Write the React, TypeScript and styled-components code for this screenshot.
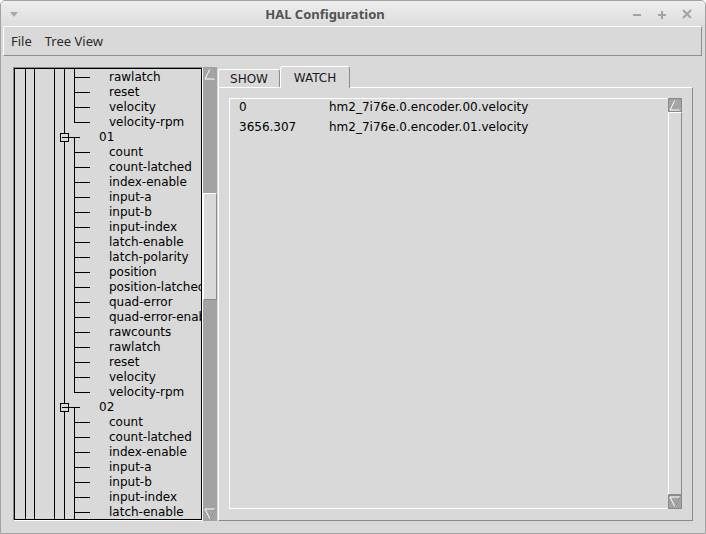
import React from 'react';
import styled, { createGlobalStyle } from 'styled-components';

const GlobalStyle = createGlobalStyle`
  html, body {
    margin: 0;
    padding: 0;
    background: #ffffff;
  }
  * {
    box-sizing: border-box;
  }
`;

const Window = styled.div`
  width: 706px;
  height: 534px;
  display: flex;
  flex-direction: column;
  border: 1px solid #a2a2a2;
  border-radius: 5px 5px 0 0;
  background: #d9d9d9;
  overflow: hidden;
`;

const TitleBar = styled.div`
  height: 25px;
  display: flex;
  align-items: center;
  background: linear-gradient(#eeeeee, #dcdcdc);
`;

const TitleSide = styled.div`
  width: 25px;
  height: 100%;
  display: flex;
  align-items: center;
  padding-left: 8px;
`;

const Title = styled.div`
  flex: 1;
  text-align: center;
  font-family: 'Noto Sans', 'DejaVu Sans', sans-serif;
  font-weight: bold;
  font-size: 13px;
  color: #535353;
`;

const TitleButtons = styled.div`
  display: flex;
  padding-right: 6px;
`;

const TitleButton = styled.div`
  width: 25px;
  height: 25px;
  display: flex;
  align-items: center;
  justify-content: center;
`;

const MenuBar = styled.div`
  height: 30px;
  margin: 0 3px 0 2px;
  display: flex;
  align-items: center;
  gap: 13px;
  padding-left: 7px;
  border-top: 1px solid #ffffff;
  border-left: 1px solid #ffffff;
  border-bottom: 1px solid #8e8e8e;
  border-right: 1px solid #8e8e8e;
  font-family: 'Noto Sans', 'DejaVu Sans', sans-serif;
  font-size: 13px;
  color: #2b2b2b;
`;

const Body = styled.div`
  flex: 1;
  display: flex;
  padding: 10px 12px 12px 12px;
`;

const TreeColumn = styled.div`
  display: flex;
  height: 454px;
  margin-top: 1px;
`;

const TreeFrame = styled.div`
  width: 190px;
  height: 100%;
  border: 1px solid;
  border-color: #8a8a8a #ffffff #ffffff #8a8a8a;
`;

const TreeCanvas = styled.div`
  height: 100%;
  border: 1px solid #000000;
  overflow: hidden;
  font-family: 'DejaVu Sans', sans-serif;
  font-size: 12px;
  color: #000000;
`;

const TreeRow = styled.div`
  height: 15px;
  display: flex;
  align-items: flex-start;
  white-space: nowrap;
`;

const TreeLabel = styled.span`
  line-height: 15px;
  padding-top: 1px;
`;

const TreeLines = styled.svg`
  flex: none;
  display: block;
`;

const ScrollBar = styled.div<{ $trough?: boolean }>`
  width: 14px;
  display: flex;
  flex-direction: column;
  background: ${({ $trough }) => ($trough ? '#a3a3a3' : '#d9d9d9')};
`;

const TreeScroll = styled(ScrollBar)`
  margin-right: 1px;
`;

const ArrowButton = styled.div<{ $filled?: boolean }>`
  height: 14px;
  flex: none;
  display: flex;
  align-items: center;
  justify-content: center;
  background: ${({ $filled }) => ($filled ? '#a3a3a3' : 'transparent')};
  border: ${({ $filled }) => ($filled ? '1px solid #8a8a8a' : 'none')};
`;

const ScrollSpacer = styled.div<{ $size?: number }>`
  flex: ${({ $size }) => ($size ? `0 0 ${$size}px` : '1')};
`;

const Thumb = styled.div<{ $size?: number }>`
  flex: ${({ $size }) => ($size ? `0 0 ${$size}px` : '1')};
  background: #d9d9d9;
  border: 1px solid;
  border-color: #ffffff #8a8a8a #8a8a8a #ffffff;
`;

const Panel = styled.div`
  width: 475px;
  display: flex;
  flex-direction: column;
`;

const TabRow = styled.div`
  height: 21px;
  display: flex;
  align-items: flex-end;
`;

const Tab = styled.div<{ $active?: boolean; $width: number }>`
  position: relative;
  z-index: ${({ $active }) => ($active ? 1 : 0)};
  width: ${({ $width }) => $width}px;
  height: ${({ $active }) => ($active ? '22px' : '18px')};
  margin-bottom: ${({ $active }) => ($active ? '-1px' : '0')};
  display: flex;
  align-items: center;
  justify-content: center;
  background: #d9d9d9;
  border-top: 1px solid #ffffff;
  border-left: 1px solid #ffffff;
  border-right: 1px solid #8a8a8a;
  border-radius: 3px 3px 0 0;
  font-family: 'DejaVu Sans', sans-serif;
  font-size: 12px;
  color: #1a1a1a;
`;

const TabBody = styled.div`
  flex: 1;
  display: flex;
  padding: 10px 10px 11px 10px;
  border: 1px solid;
  border-color: #ffffff #8a8a8a #8a8a8a #ffffff;
`;

const ListBox = styled.div`
  flex: 1;
  display: flex;
`;

const ListContent = styled.div`
  flex: 1;
  padding: 1px 0 0 9px;
  border-top: 1px solid #ffffff;
  border-left: 1px solid #ffffff;
  border-bottom: 1px solid #ffffff;
  font-family: 'DejaVu Sans', sans-serif;
  font-size: 12px;
  color: #000000;
`;

const ListRow = styled.div`
  height: 14px;
  line-height: 14px;
  margin-bottom: 6px;
  display: flex;
  white-space: nowrap;
`;

const ValueCell = styled.div`
  width: 90px;
`;

type Node = { label: string; parent?: boolean; last?: boolean };

const treeRows: Node[] = [
  { label: 'rawlatch' },
  { label: 'reset' },
  { label: 'velocity' },
  { label: 'velocity-rpm', last: true },
  { label: '01', parent: true },
  { label: 'count' },
  { label: 'count-latched' },
  { label: 'index-enable' },
  { label: 'input-a' },
  { label: 'input-b' },
  { label: 'input-index' },
  { label: 'latch-enable' },
  { label: 'latch-polarity' },
  { label: 'position' },
  { label: 'position-latched' },
  { label: 'quad-error' },
  { label: 'quad-error-enable' },
  { label: 'rawcounts' },
  { label: 'rawlatch' },
  { label: 'reset' },
  { label: 'velocity' },
  { label: 'velocity-rpm', last: true },
  { label: '02', parent: true },
  { label: 'count' },
  { label: 'count-latched' },
  { label: 'index-enable' },
  { label: 'input-a' },
  { label: 'input-b' },
  { label: 'input-index' },
  { label: 'latch-enable' },
];

const watches = [
  { value: '0', pin: 'hm2_7i76e.0.encoder.00.velocity' },
  { value: '3656.307', pin: 'hm2_7i76e.0.encoder.01.velocity' },
];

const ancestors = [10.5, 19.5, 39.5, 49.5];

const TreeItem = ({ node }: { node: Node }) => {
  const width = node.parent ? 84 : 94;
  return (
    <TreeRow>
      <TreeLines width={width} height={15} shapeRendering="crispEdges">
        {ancestors.map((x) => (
          <line key={x} x1={x} y1={0} x2={x} y2={15} stroke="#000" />
        ))}
        {node.parent ? (
          <>
            <line x1={59.5} y1={8.5} x2={59.5} y2={15} stroke="#000" />
            <line x1={53} y1={8.5} x2={65} y2={8.5} stroke="#000" />
            <rect x={45.5} y={4.5} width={8} height={8} fill="#d9d9d9" stroke="#000" />
            <line x1={47} y1={8.5} x2={53} y2={8.5} stroke="#000" />
          </>
        ) : (
          <>
            <line x1={59.5} y1={0} x2={59.5} y2={node.last ? 9 : 15} stroke="#000" />
            <line x1={59} y1={8.5} x2={75} y2={8.5} stroke="#000" />
          </>
        )}
      </TreeLines>
      <TreeLabel>{node.label}</TreeLabel>
    </TreeRow>
  );
};

const UpArrow = () => (
  <svg width="12" height="12" viewBox="0 0 12 12">
    <polygon points="6,1 11,11 1,11" fill="none" stroke="#ffffff" />
    <line x1="6" y1="1" x2="11" y2="11" stroke="#8a8a8a" />
  </svg>
);

const DownArrow = () => (
  <svg width="12" height="12" viewBox="0 0 12 12">
    <polygon points="1,1 11,1 6,11" fill="none" stroke="#ffffff" />
    <line x1="11" y1="1" x2="6" y2="11" stroke="#7a7a7a" />
  </svg>
);

const App = () => (
  <>
    <GlobalStyle />
    <Window>
      <TitleBar>
        <TitleSide>
          <svg width="10" height="8" viewBox="0 0 10 8">
            <polygon points="1,2 9,2 5,7" fill="#a8a8a8" />
          </svg>
        </TitleSide>
        <Title>HAL Configuration</Title>
        <TitleButtons>
          <TitleButton>
            <svg width="12" height="12" viewBox="0 0 12 12">
              <line x1="2" y1="7" x2="10" y2="7" stroke="#a3a3a3" strokeWidth="2" />
            </svg>
          </TitleButton>
          <TitleButton>
            <svg width="12" height="12" viewBox="0 0 12 12">
              <line x1="2" y1="7" x2="10" y2="7" stroke="#a3a3a3" strokeWidth="2" />
              <line x1="6" y1="3" x2="6" y2="11" stroke="#a3a3a3" strokeWidth="2" />
            </svg>
          </TitleButton>
          <TitleButton>
            <svg width="12" height="12" viewBox="0 0 12 12">
              <line x1="2" y1="2" x2="10" y2="10" stroke="#a3a3a3" strokeWidth="2" />
              <line x1="10" y1="2" x2="2" y2="10" stroke="#a3a3a3" strokeWidth="2" />
            </svg>
          </TitleButton>
        </TitleButtons>
      </TitleBar>
      <MenuBar>
        <span>File</span>
        <span>Tree View</span>
      </MenuBar>
      <Body>
        <TreeColumn>
          <TreeFrame>
            <TreeCanvas>
              {treeRows.map((node, i) => (
                <TreeItem key={i} node={node} />
              ))}
            </TreeCanvas>
          </TreeFrame>
          <TreeScroll $trough>
            <ArrowButton>
              <UpArrow />
            </ArrowButton>
            <ScrollSpacer $size={112} />
            <Thumb $size={107} />
            <ScrollSpacer />
            <ArrowButton>
              <DownArrow />
            </ArrowButton>
          </TreeScroll>
        </TreeColumn>
        <Panel>
          <TabRow>
            <Tab $width={62}>SHOW</Tab>
            <Tab $active $width={70}>WATCH</Tab>
          </TabRow>
          <TabBody>
            <ListBox>
              <ListContent>
                {watches.map((w) => (
                  <ListRow key={w.pin}>
                    <ValueCell>{w.value}</ValueCell>
                    <span>{w.pin}</span>
                  </ListRow>
                ))}
              </ListContent>
              <ScrollBar>
                <ArrowButton $filled>
                  <UpArrow />
                </ArrowButton>
                <Thumb />
                <ArrowButton $filled>
                  <DownArrow />
                </ArrowButton>
              </ScrollBar>
            </ListBox>
          </TabBody>
        </Panel>
      </Body>
    </Window>
  </>
);

export default App;
